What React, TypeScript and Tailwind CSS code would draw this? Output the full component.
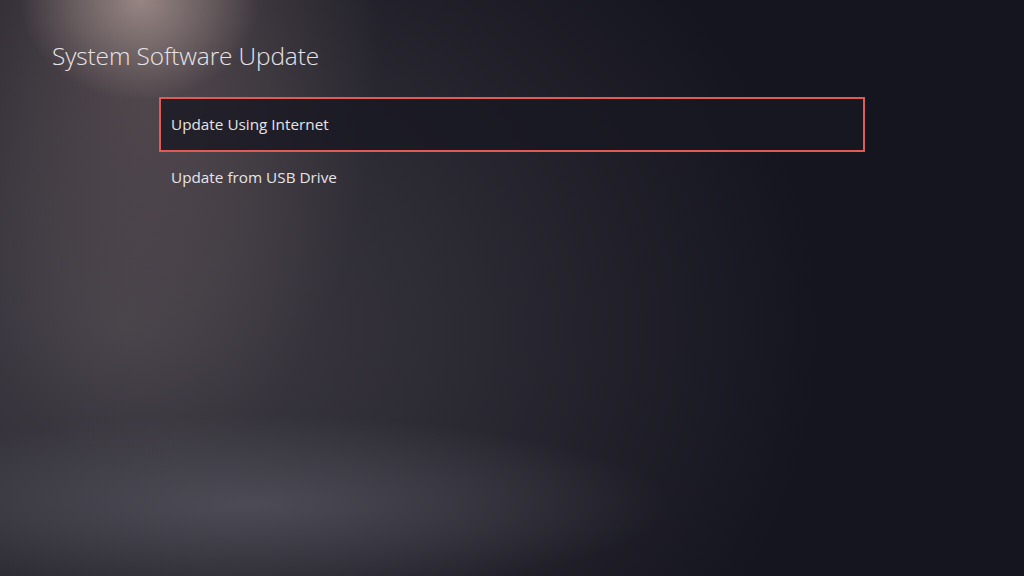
export default function App() {
  const items = ["Update Using Internet", "Update from USB Drive"];

  return (
    <div className="relative w-[1024px] h-[576px] overflow-hidden bg-[#15151f] font-['Open_Sans','Noto_Sans',sans-serif] text-[#e6e4e8]">
      {/* background light: spot at top-left, glow on the floor */}
      <div className="absolute inset-0 bg-[radial-gradient(ellipse_120px_100px_at_140px_0px,rgba(175,155,150,0.75),transparent),radial-gradient(ellipse_230px_430px_at_150px_40px,rgba(115,98,100,0.55),transparent),radial-gradient(ellipse_420px_90px_at_250px_505px,rgba(95,95,105,0.6),transparent),radial-gradient(ellipse_700px_560px_at_120px_330px,rgba(70,66,74,0.9),transparent)]" />

      <div className="relative flex flex-col pt-[40px]">
        <h1 className="pl-[52px] text-[24.4px] font-light leading-[32px] tracking-[-0.1px]">
          System Software Update
        </h1>

        <ul className="mt-[25px] ml-[159px] w-[706px] flex flex-col">
          {items.map((label, i) => (
            <li
              key={label}
              className={
                i === 0
                  ? "h-[55px] flex items-center pl-[10px] border-2 border-[#e25a55] bg-[#181822]/80 text-[15.3px]"
                  : "h-[50px] flex items-center pl-[12px] text-[15.3px]"
              }
            >
              {label}
            </li>
          ))}
        </ul>
      </div>
    </div>
  );
}
